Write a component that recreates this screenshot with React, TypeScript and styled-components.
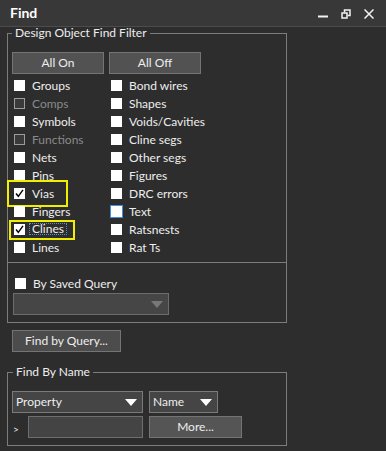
import React from 'react';
import styled, { createGlobalStyle } from 'styled-components';

const GlobalStyle = createGlobalStyle`
  html, body { margin: 0; padding: 0; background: #2d2d2d; }
  body { font-family: Lato, "Noto Sans", sans-serif; font-size: 12px; color: #eeeeee; }
  * { box-sizing: border-box; }
`;

const Window = styled.div`
  width: 386px;
  height: 451px;
  background: #2d2d2d;
  display: flex;
  flex-direction: column;
  overflow: hidden;
`;

const TitleBar = styled.div`
  height: 27px;
  flex: none;
  background: #383838;
  border-bottom: 1px solid #4c4c4c;
  display: flex;
  align-items: center;
  padding: 0 12px 0 10px;
`;

const Title = styled.div`
  flex: 1;
  font-weight: 700;
  font-size: 14px;
  color: #ffffff;
  line-height: 1;
  padding-bottom: 1px;
`;

const WinControls = styled.div`
  display: flex;
  align-items: center;
  gap: 13px;
  color: #f2f2f2;
  padding-top: 1px;
`;

const Body = styled.div`
  padding: 0 0 0 7px;
  display: flex;
  flex-direction: column;
  align-items: flex-start;
`;

const Group = styled.fieldset<{ $mt?: number }>`
  width: 280px;
  min-width: 0;
  margin: ${p => p.$mt ?? 0}px 0 0 0;
  padding: 0;
  border: 1px solid #7c7c7c;
`;

const Legend = styled.legend<{ $ml: number }>`
  margin-left: ${p => p.$ml}px;
  padding: 0 3px;
  font-size: 12px;
  line-height: 12px;
  color: #eeeeee;
`;

const FilterSection = styled.div`
  padding: 13px 4px 6px;
  border-bottom: 1px solid #7c7c7c;
`;

const ButtonRow = styled.div`
  display: flex;
  gap: 5px;
`;

const Button = styled.button<{ $w: number; $bg?: string }>`
  width: ${p => p.$w}px;
  height: 22px;
  padding: 0;
  background: ${p => p.$bg ?? '#525252'};
  border: 1px solid #747474;
  color: #eeeeee;
  font-family: inherit;
  font-size: 12px;
  line-height: 20px;
`;

const CheckGrid = styled.div`
  margin-top: 2px;
  display: grid;
  grid-template-columns: 97px 97px;
  grid-template-rows: repeat(10, 18px);
  grid-auto-flow: column;
`;

const CheckRow = styled.label<{ $disabled?: boolean }>`
  position: relative;
  display: flex;
  align-items: center;
  gap: 7px;
  padding-left: 2px;
  height: 18px;
  white-space: nowrap;
  color: ${p => (p.$disabled ? '#8a8a8a' : '#eeeeee')};
`;

type BoxKind = 'normal' | 'disabled' | 'focus';

const Box = styled.span<{ $kind: BoxKind }>`
  flex: none;
  display: flex;
  align-items: center;
  justify-content: center;
  width: ${p => (p.$kind === 'focus' ? 13 : 11)}px;
  height: ${p => (p.$kind === 'focus' ? 13 : 11)}px;
  margin: 0 ${p => (p.$kind === 'focus' ? -1 : 0)}px;
  background: ${p => (p.$kind === 'disabled' ? '#3a3a3a' : '#ffffff')};
  border: ${p =>
    p.$kind === 'disabled' ? '1px solid #9c9c9c' : p.$kind === 'focus' ? '1px solid #3d8fe0' : 'none'};
`;

const FocusText = styled.span`
  display: inline-block;
  margin-left: -2px;
  padding: 0 2px;
  line-height: 10px;
  outline: 1px dotted #5b8fc9;
  outline-offset: 0;
`;

const Highlight = styled.span<{ $l: number; $t: number; $w: number; $h: number }>`
  position: absolute;
  left: ${p => p.$l}px;
  top: ${p => p.$t}px;
  width: ${p => p.$w}px;
  height: ${p => p.$h}px;
  border: 2px solid #f2ee00;
  pointer-events: none;
`;

const QuerySection = styled.div`
  padding: 11px 5px 7px;
  display: flex;
  flex-direction: column;
  align-items: flex-start;
  gap: 1px;
`;

const Select = styled.div<{ $w: number; $disabled?: boolean }>`
  width: ${p => p.$w}px;
  height: 22px;
  display: flex;
  align-items: center;
  justify-content: space-between;
  padding: 0 5px 0 3px;
  background: ${p => (p.$disabled ? '#464646' : '#454545')};
  border: 1px solid ${p => (p.$disabled ? '#6c6c6c' : '#7a7a7a')};
  color: #eeeeee;
  line-height: 20px;
`;

const Arrow = styled.span<{ $color: string }>`
  width: 0;
  height: 0;
  border-left: 6px solid transparent;
  border-right: 6px solid transparent;
  border-top: 7px solid ${p => p.$color};
  margin-top: 1px;
`;

const QueryButtonWrap = styled.div`
  margin: 7px 0 0 5px;
`;

const NameSection = styled.div`
  padding: 13px 4px 7px;
  display: grid;
  grid-template-columns: 131px auto;
  column-gap: 6px;
  row-gap: 3px;
  justify-items: start;
`;

const PromptCell = styled.div`
  width: 131px;
  display: flex;
  align-items: center;
  justify-content: space-between;
`;

const Prompt = styled.span`
  padding-left: 1px;
  font-size: 10px;
  color: #eeeeee;
  padding-top: 3px;
`;

const TextInput = styled.div`
  width: 115px;
  height: 22px;
  background: #444444;
  border: 1px solid #6e6e6e;
`;

const CheckMark = () => (
  <svg width="11" height="11" viewBox="0 0 11 11">
    <polyline points="2,5.5 4.3,8.3 9,1.8" fill="none" stroke="#000" strokeWidth="1.4" />
  </svg>
);

type Item = { label: string; kind?: BoxKind; checked?: boolean; focusText?: boolean; hl?: [number, number, number, number] };

const items: Item[] = [
  { label: 'Groups' },
  { label: 'Comps', kind: 'disabled' },
  { label: 'Symbols' },
  { label: 'Functions', kind: 'disabled' },
  { label: 'Nets' },
  { label: 'Pins' },
  { label: 'Vias', checked: true, hl: [-5, -4, 61, 27] },
  { label: 'Fingers' },
  { label: 'Clines', checked: true, focusText: true, hl: [-3, 0, 66, 20] },
  { label: 'Lines' },
  { label: 'Bond wires' },
  { label: 'Shapes' },
  { label: 'Voids/Cavities' },
  { label: 'Cline segs' },
  { label: 'Other segs' },
  { label: 'Figures' },
  { label: 'DRC errors' },
  { label: 'Text', kind: 'focus' },
  { label: 'Ratsnests' },
  { label: 'Rat Ts' },
];

export default function App() {
  return (
    <>
      <GlobalStyle />
      <Window>
        <TitleBar>
          <Title>Find</Title>
          <WinControls>
            <svg width="10" height="10" viewBox="0 0 10 10">
              <rect x="0" y="6.5" width="10" height="2" fill="currentColor" />
            </svg>
            <svg width="10" height="10" viewBox="0 0 10 10">
              <path d="M3.5 3.5 V1 H9 V6.5 H6.5" fill="none" stroke="currentColor" strokeWidth="1.5" />
              <rect x="1" y="4" width="5" height="5" fill="none" stroke="currentColor" strokeWidth="1.5" />
            </svg>
            <svg width="10" height="10" viewBox="0 0 10 10">
              <path d="M0.5 0.5 L9.5 9.5 M9.5 0.5 L0.5 9.5" stroke="currentColor" strokeWidth="1.5" />
            </svg>
          </WinControls>
        </TitleBar>
        <Body>
          <Group>
            <Legend $ml={4}>Design Object Find Filter</Legend>
            <FilterSection>
              <ButtonRow>
                <Button $w={92}>All On</Button>
                <Button $w={92}>All Off</Button>
              </ButtonRow>
              <CheckGrid>
                {items.map(it => (
                  <CheckRow key={it.label} $disabled={it.kind === 'disabled'}>
                    <Box $kind={it.kind ?? 'normal'}>{it.checked && <CheckMark />}</Box>
                    {it.focusText ? <FocusText>{it.label}</FocusText> : <span>{it.label}</span>}
                    {it.hl && <Highlight $l={it.hl[0]} $t={it.hl[1]} $w={it.hl[2]} $h={it.hl[3]} />}
                  </CheckRow>
                ))}
              </CheckGrid>
            </FilterSection>
            <QuerySection>
              <CheckRow>
                <Box $kind="normal" />
                <span>By Saved Query</span>
              </CheckRow>
              <Select $w={156} $disabled>
                <span />
                <Arrow $color="#787878" />
              </Select>
            </QuerySection>
          </Group>
          <QueryButtonWrap>
            <Button $w={109} $bg="#4c4c4c">Find by Query...</Button>
          </QueryButtonWrap>
          <Group $mt={14}>
            <Legend $ml={5}>Find By Name</Legend>
            <NameSection>
              <Select $w={131}>
                <span>Property</span>
                <Arrow $color="#ffffff" />
              </Select>
              <Select $w={69}>
                <span>Name</span>
                <Arrow $color="#ffffff" />
              </Select>
              <PromptCell>
                <Prompt>&gt;</Prompt>
                <TextInput />
              </PromptCell>
              <Button $w={93} $bg="#555555">More...</Button>
            </NameSection>
          </Group>
        </Body>
      </Window>
    </>
  );
}
